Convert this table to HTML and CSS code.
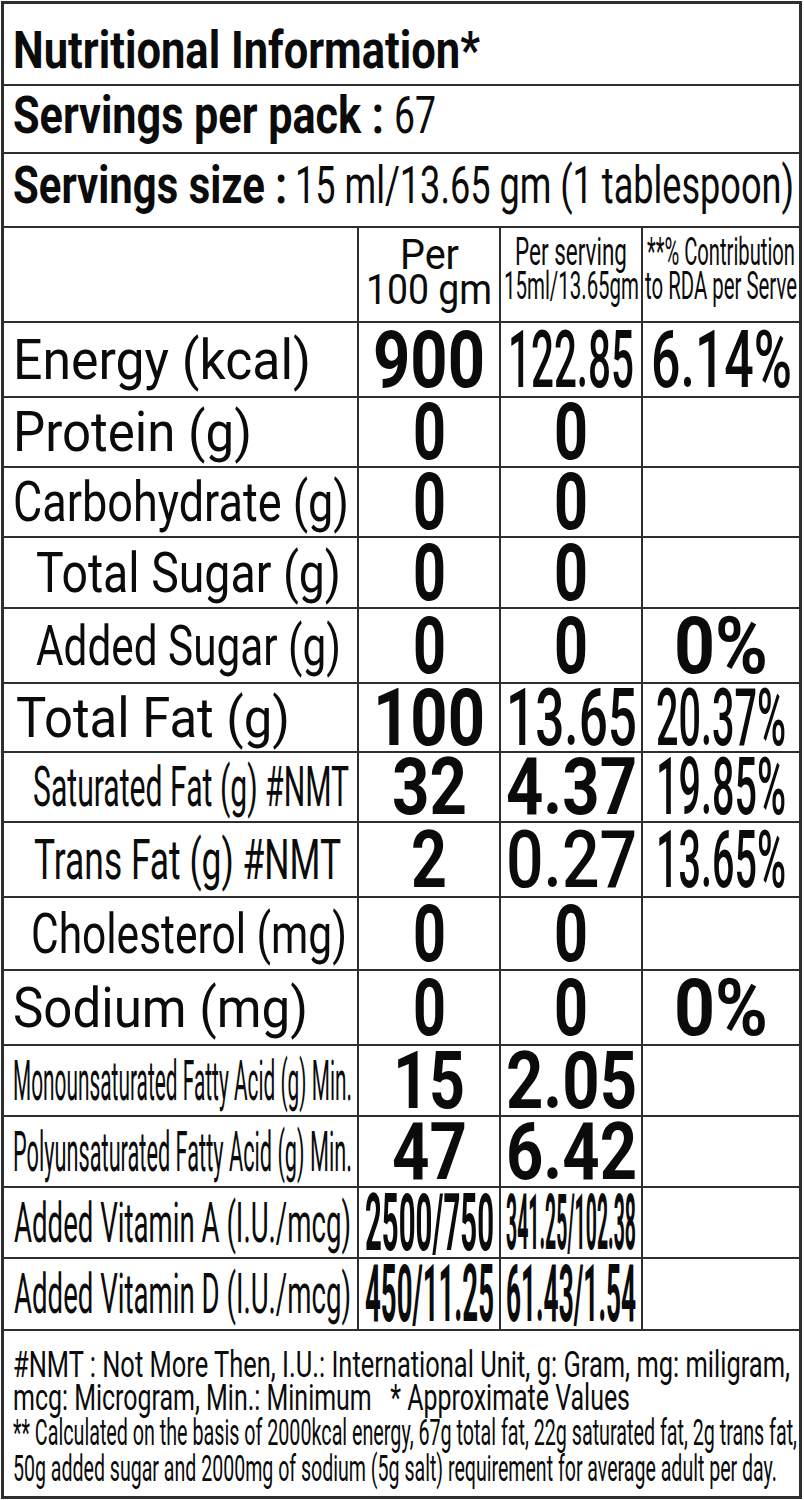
FILE: index.html
```html
<!DOCTYPE html>
<html lang="en">
<head>
<meta charset="utf-8">
<title>Nutritional Information</title>
<link rel="stylesheet" href="styles.css">
</head>
<body>
<div class="panel">
  <div class="line title-row"><span class="f t-title" data-w="467">Nutritional Information*</span></div>
  <div class="line spp-row"><span class="f t-head" data-w="371">Servings per pack :</span><span class="f t-sub" data-w="42">67</span></div>
  <div class="line ss-row"><span class="f t-head" data-w="274">Servings size :</span><span class="f t-sub" data-w="499">15 ml/13.65 gm (1 tablespoon)</span></div>

  <div class="grid h-head">
    <div class="cell"></div>
    <div class="cell val stack s2"><span class="f t-h2" data-w="59">Per</span><span class="f t-h2" data-w="126">100 gm</span></div>
    <div class="cell val stack s3"><span class="f t-h3" data-w="112">Per serving</span><span class="f t-h3" data-w="135">15ml/13.65gm</span></div>
    <div class="cell val stack s3"><span class="f t-h3" data-w="148">**% Contribution</span><span class="f t-h3" data-w="152">to RDA per Serve</span></div>
  </div>

  <div class="grid h75">
    <div class="cell lab p11"><span class="f t-lab" data-w="298">Energy (kcal)</span></div>
    <div class="cell val"><span class="f t-val" data-w="112">900</span></div>
    <div class="cell val"><span class="f t-valm" data-w="126">122.85</span></div>
    <div class="cell val"><span class="f t-valm" data-w="141">6.14%</span></div>
  </div>
  <div class="grid h70">
    <div class="cell lab p11"><span class="f t-lab" data-w="239">Protein (g)</span></div>
    <div class="cell val"><span class="f t-val" data-w="33">0</span></div>
    <div class="cell val"><span class="f t-val" data-w="34">0</span></div>
    <div class="cell"></div>
  </div>
  <div class="grid h70">
    <div class="cell lab p11"><span class="f t-lab" data-w="336">Carbohydrate (g)</span></div>
    <div class="cell val"><span class="f t-val" data-w="33">0</span></div>
    <div class="cell val"><span class="f t-val" data-w="34">0</span></div>
    <div class="cell"></div>
  </div>
  <div class="grid h71">
    <div class="cell lab p34"><span class="f t-lab" data-w="305">Total Sugar (g)</span></div>
    <div class="cell val"><span class="f t-val" data-w="33">0</span></div>
    <div class="cell val"><span class="f t-val" data-w="34">0</span></div>
    <div class="cell"></div>
  </div>
  <div class="grid h75">
    <div class="cell lab p34"><span class="f t-lab" data-w="305">Added Sugar (g)</span></div>
    <div class="cell val"><span class="f t-val" data-w="33">0</span></div>
    <div class="cell val"><span class="f t-val" data-w="34">0</span></div>
    <div class="cell val"><span class="f t-val" data-w="94">0%</span></div>
  </div>
  <div class="grid h69">
    <div class="cell lab p14"><span class="f t-lab" data-w="274">Total Fat (g)</span></div>
    <div class="cell val"><span class="f t-val" data-w="112">100</span></div>
    <div class="cell val"><span class="f t-valm" data-w="131">13.65</span></div>
    <div class="cell val"><span class="f t-valm" data-w="130">20.37%</span></div>
  </div>
  <div class="grid h70">
    <div class="cell lab p31"><span class="f t-lab" data-w="316">Saturated Fat (g) #NMT</span></div>
    <div class="cell val"><span class="f t-val" data-w="75">32</span></div>
    <div class="cell val"><span class="f t-val" data-w="131">4.37</span></div>
    <div class="cell val"><span class="f t-valm" data-w="130">19.85%</span></div>
  </div>
  <div class="grid h75">
    <div class="cell lab p32"><span class="f t-lab" data-w="307">Trans Fat (g) #NMT</span></div>
    <div class="cell val"><span class="f t-val" data-w="36">2</span></div>
    <div class="cell val"><span class="f t-valm" data-w="131">0.27</span></div>
    <div class="cell val"><span class="f t-valm" data-w="130">13.65%</span></div>
  </div>
  <div class="grid h73">
    <div class="cell lab p29"><span class="f t-lab" data-w="316">Cholesterol (mg)</span></div>
    <div class="cell val"><span class="f t-val" data-w="33">0</span></div>
    <div class="cell val"><span class="f t-val" data-w="34">0</span></div>
    <div class="cell"></div>
  </div>
  <div class="grid h75">
    <div class="cell lab p11"><span class="f t-lab" data-w="295">Sodium (mg)</span></div>
    <div class="cell val"><span class="f t-val" data-w="33">0</span></div>
    <div class="cell val"><span class="f t-val" data-w="34">0</span></div>
    <div class="cell val"><span class="f t-val" data-w="94">0%</span></div>
  </div>
  <div class="grid h71">
    <div class="cell lab p11"><span class="f t-labc" data-w="339">Monounsaturated Fatty Acid (g) Min.</span></div>
    <div class="cell val"><span class="f t-val" data-w="72">15</span></div>
    <div class="cell val"><span class="f t-val" data-w="131">2.05</span></div>
    <div class="cell"></div>
  </div>
  <div class="grid h71">
    <div class="cell lab p11"><span class="f t-labc" data-w="339">Polyunsaturated Fatty Acid (g) Min.</span></div>
    <div class="cell val"><span class="f t-val" data-w="75">47</span></div>
    <div class="cell val"><span class="f t-val" data-w="131">6.42</span></div>
    <div class="cell"></div>
  </div>
  <div class="grid h71">
    <div class="cell lab p12"><span class="f t-labc" data-w="337">Added Vitamin A (I.U./mcg)</span></div>
    <div class="cell val"><span class="f t-val" data-w="129">2500/750</span></div>
    <div class="cell val"><span class="f t-valn" data-w="130">341.25/102.38</span></div>
    <div class="cell"></div>
  </div>
  <div class="grid h72">
    <div class="cell lab p12"><span class="f t-labc" data-w="337">Added Vitamin D (I.U./mcg)</span></div>
    <div class="cell val"><span class="f t-val" data-w="129">450/11.25</span></div>
    <div class="cell val"><span class="f t-val" data-w="130">61.43/1.54</span></div>
    <div class="cell"></div>
  </div>

  <div class="foot">
    <div class="fl fl1"><span class="f t-foot" data-w="777">#NMT : Not More Then, I.U.: International Unit, g: Gram, mg: miligram,</span></div>
    <div class="fl fl2"><span class="f t-foot" data-w="617">mcg: Microgram, Min.: Minimum&nbsp;&nbsp; * Approximate Values</span></div>
    <div class="fl fl3"><span class="f t-foot" data-w="784">** Calculated on the basis of 2000kcal energy, 67g total fat, 22g saturated fat, 2g trans fat,</span></div>
    <div class="fl fl4"><span class="f t-foot" data-w="764">50g added sugar and 2000mg of sodium (5g salt) requirement for average adult per day.</span></div>
  </div>
</div>
<script src="script.js"></script>
</body>
</html>
```

FILE: styles.css
```css
html, body {
  margin: 0;
  padding: 0;
  background: #ffffff;
}

body {
  font-family: Roboto, "Liberation Sans", sans-serif;
  color: #0b0b0b;
}

.panel {
  width: 801px;
  margin: 1px 0 0 1px;
  border: 3px solid #2e2e2e;
  box-sizing: border-box;
}

.f {
  display: inline-block;
  flex: none;
  white-space: nowrap;
  transform-origin: 0 50%;
  line-height: 1;
}

.line {
  display: flex;
  align-items: center;
  box-sizing: border-box;
  border-bottom: 2px solid #2e2e2e;
  padding-left: 9px;
}

.title-row {
  height: 82px;
  padding-top: 12px;
}

.spp-row {
  height: 68px;
  padding-bottom: 8px;
  gap: 10px;
}

.ss-row {
  height: 74px;
  padding-bottom: 9px;
  gap: 8px;
}

.t-title {
  font-size: 51px;
  font-weight: 700;
}

.t-head {
  font-size: 51px;
  font-weight: 700;
}

.t-sub {
  font-size: 51px;
  font-weight: 400;
}

.grid {
  display: grid;
  grid-template-columns: 355px 142px 142px 156px;
  grid-template-rows: minmax(0, 1fr);
  box-sizing: border-box;
  border-bottom: 2px solid #2e2e2e;
}

.cell {
  box-sizing: border-box;
  border-right: 2px solid #2e2e2e;
  display: flex;
  align-items: center;
  min-width: 0;
  min-height: 0;
}

.cell:last-child {
  border-right: none;
}

.val {
  justify-content: center;
}

.stack {
  flex-direction: column;
  justify-content: center;
}

.s2 {
  padding-bottom: 6px;
}

.s3 {
  padding-bottom: 12px;
}

.h-head { height: 95px; }
.h69 { height: 69px; }
.h70 { height: 70px; }
.h71 { height: 71px; }
.h72 { height: 72px; }
.h73 { height: 73px; }
.h75 { height: 75px; }

.p11 { padding-left: 9px; }
.p12 { padding-left: 10px; }
.p14 { padding-left: 12px; }
.p29 { padding-left: 27px; }
.p31 { padding-left: 29px; }
.p32 { padding-left: 30px; }
.p34 { padding-left: 32px; }

.t-h2 {
  font-size: 42px;
  font-weight: 400;
  line-height: 35px;
}

.t-h3 {
  font-size: 38px;
  font-weight: 400;
  line-height: 34px;
}

.t-lab {
  font-size: 56px;
  font-weight: 400;
}

.t-labc {
  font-size: 56px;
  font-weight: 400;
}

.t-val {
  font-size: 80px;
  font-weight: 700;
}

.t-valm {
  font-size: 80px;
  font-weight: 500;
}

.t-valn {
  font-size: 78px;
  font-weight: 700;
}

.foot {
  height: 165px;
  box-sizing: border-box;
  padding: 17px 0 0 9px;
  display: flex;
  flex-direction: column;
}

.fl {
  display: flex;
  align-items: center;
}

.fl1 { height: 34px; }
.fl2 { height: 32px; }
.fl3 { height: 38px; }
.fl4 { height: 34px; }

.t-foot {
  font-size: 36px;
  font-weight: 400;
}
```

FILE: script.js
```js
function fitText() {
  var items = document.querySelectorAll('.f');
  for (var i = 0; i < items.length; i++) {
    var el = items[i];
    el.style.transform = 'none';
    el.style.marginRight = '0px';
    var w = el.getBoundingClientRect().width;
    var t = parseFloat(el.getAttribute('data-w'));
    if (w > 0 && t > 0) {
      el.style.transform = 'scaleX(' + (t / w) + ')';
      el.style.marginRight = (t - w) + 'px';
    }
  }
}
fitText();
if (document.fonts && document.fonts.ready) {
  document.fonts.ready.then(fitText);
}
```
